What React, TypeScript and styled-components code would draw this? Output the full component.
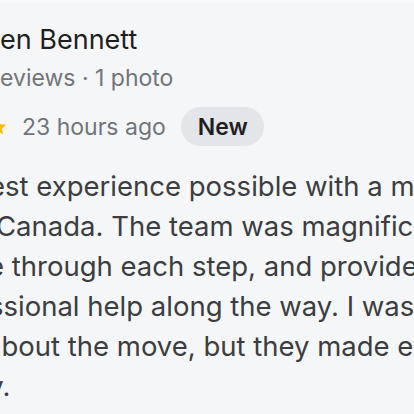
import React from 'react';
import styled, { createGlobalStyle } from 'styled-components';

const GlobalStyle = createGlobalStyle`
  html, body {
    margin: 0;
    padding: 0;
    background: #f5f6f8;
  }
  body {
    font-family: Inter, "Noto Sans", Roboto, sans-serif;
    -webkit-font-smoothing: antialiased;
  }
`;

const Viewport = styled.div`
  width: 414px;
  height: 414px;
  overflow: hidden;
  background: #f5f6f8;
  border-top: 3px solid #f8f9fa;
  box-sizing: border-box;
`;

const Card = styled.article`
  display: flex;
  flex-direction: column;
  padding-top: 21px;
`;

const Name = styled.h3`
  margin: 0;
  font-size: 27px;
  font-weight: 400;
  line-height: 32px;
  color: #1f1f1f;
  white-space: nowrap;
`;

const Stats = styled.div`
  margin-top: 7px;
  font-size: 23px;
  line-height: 30px;
  color: #70757a;
  white-space: nowrap;
`;

const MetaRow = styled.div`
  display: flex;
  align-items: center;
  gap: 14px;
  margin-top: 14px;
  height: 39px;
  white-space: nowrap;
`;

const Stars = styled.div`
  display: flex;
  gap: 2px;
  margin-left: -100px;
`;

const Time = styled.span`
  font-size: 23px;
  color: #70757a;
  margin-right: 1px;
`;

const Badge = styled.span`
  display: inline-flex;
  align-items: center;
  height: 39px;
  padding: 0 16px 0 17px;
  border-radius: 20px;
  background: #e3e5e8;
  color: #1f1f1f;
  font-size: 23px;
  font-weight: 600;
`;

const Body = styled.p`
  margin: 20px 0 0;
  font-size: 27.5px;
  line-height: 40px;
  color: #3c3d40;
`;

const Line = styled.span<{ $shift?: number }>`
  display: block;
  white-space: nowrap;
  margin-left: ${(p) => -(p.$shift ?? 0)}px;
`;

const Star = () => (
  <svg width="20" height="20" viewBox="0 0 24 24">
    <path
      d="M12 2.5l2.9 6.2 6.8.7-5.1 4.6 1.5 6.7L12 17.3l-5.9 3.4 1.5-6.7-5.1-4.6 6.8-.7z"
      fill="#fbbc04"
    />
  </svg>
);

export default function App() {
  return (
    <>
      <GlobalStyle />
      <Viewport>
        <Card>
          <Name>en Bennett</Name>
          <Stats>eviews · 1 photo</Stats>
          <MetaRow>
            <Stars>
              {[0, 1, 2, 3, 4].map((i) => (
                <Star key={i} />
              ))}
            </Stars>
            <Time>23 hours ago</Time>
            <Badge>New</Badge>
          </MetaRow>
          <Body>
            <Line $shift={11}>est experience possible with a move</Line>
            <Line $shift={4}>Canada. The team was magnificent</Line>
            <Line $shift={12}>e through each step, and provided</Line>
            <Line $shift={11}>ssional help along the way. I was</Line>
            <Line $shift={14}>about the move, but they made everything</Line>
            <Line $shift={58}>easy.</Line>
          </Body>
        </Card>
      </Viewport>
    </>
  );
}
